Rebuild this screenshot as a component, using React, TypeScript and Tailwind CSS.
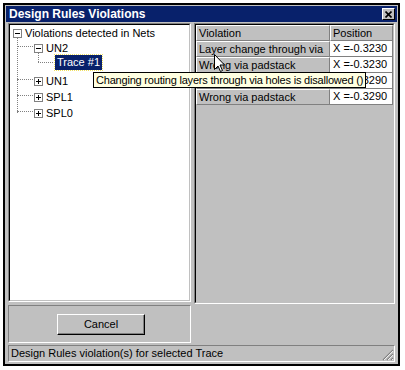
import React from "react";

const F = { fontFamily: '"Liberation Sans", Arial, sans-serif' };

function Box({ minus }: { minus?: boolean }) {
  return (
    <span className="relative inline-block w-[9px] h-[9px] border border-[#808080] bg-white shrink-0">
      <span className="absolute left-[1px] top-[3px] w-[5px] h-px bg-black" />
      {!minus && <span className="absolute left-[3px] top-[1px] w-px h-[5px] bg-black" />}
    </span>
  );
}

const rows = [
  ["Layer change through via", "X =-0.3230"],
  ["Wrong via padstack", "X =-0.3230"],
  ["Wrong via padstack", "X =-0.3290"],
  ["Wrong via padstack", "X =-0.3290"],
];

export default function App() {
  return (
    <div className="w-[405px] h-[370px] bg-white pl-[3px] pt-[3px] text-[11px] text-black whitespace-nowrap" style={F}>
      <div className="relative w-[397px] h-[363px] border-2 border-black bg-[#c0c0c0] flex flex-col">
        {/* title bar */}
        <div className="mx-px mt-px h-[17px] bg-[#08216b] flex items-center justify-between pl-[3px] pr-[2px]">
          <span className="text-white font-bold text-[12px] leading-none">Design Rules Violations</span>
          <span className="w-[13px] h-[12px] bg-[#c0c0c0] border border-t-white border-l-white border-r-black border-b-black flex items-center justify-center">
            <svg width="7" height="7" viewBox="0 0 7 7"><path d="M0.5 0.5L6.5 6.5M6.5 0.5L0.5 6.5" stroke="black" strokeWidth="1.6" /></svg>
          </span>
        </div>
        {/* body */}
        <div className="flex flex-1 mt-[1px] px-[3px] gap-[3px]">
          <div className="w-[188px] flex flex-col">
            {/* tree */}
            <div className="h-[279px] bg-white border border-t-[#808080] border-l-[#808080] border-r-white border-b-white">
              <div className="h-full border border-t-black border-l-black border-r-[#c0c0c0] border-b-[#c0c0c0] relative">
                {/* dotted lines */}
                <div className="absolute left-[7px] top-[10px] h-[78px] border-l border-dotted border-[#808080]" />
                <div className="absolute left-[7px] top-[21px] w-[16px] border-t border-dotted border-[#808080]" />
                <div className="absolute left-[7px] top-[54px] w-[16px] border-t border-dotted border-[#808080]" />
                <div className="absolute left-[7px] top-[70px] w-[16px] border-t border-dotted border-[#808080]" />
                <div className="absolute left-[7px] top-[86px] w-[16px] border-t border-dotted border-[#808080]" />
                <div className="absolute left-[28px] top-[25px] h-[12px] border-l border-dotted border-[#808080]" />
                <div className="absolute left-[28px] top-[37px] w-[17px] border-t border-dotted border-[#808080]" />
                <div className="absolute left-[3px] top-[1px] flex items-center gap-[3px] h-[14px]"><Box minus /><span>Violations detected in Nets</span></div>
                <div className="absolute left-[24px] top-[16px] flex items-center gap-[3px] h-[14px]"><Box minus /><span>UN2</span></div>
                <div className="absolute left-[45px] top-[30px] h-[15px] px-[2px] bg-[#08216b] text-white flex items-center outline-1 outline-dotted outline-[#f0e060]">Trace #1</div>
                <div className="absolute left-[24px] top-[49px] flex items-center gap-[3px] h-[14px]"><Box /><span>UN1</span></div>
                <div className="absolute left-[24px] top-[65px] flex items-center gap-[3px] h-[14px]"><Box /><span>SPL1</span></div>
                <div className="absolute left-[24px] top-[81px] flex items-center gap-[3px] h-[14px]"><Box /><span>SPL0</span></div>
              </div>
            </div>
            {/* cancel panel */}
            <div className="mt-[3px] h-[38px] border border-t-[#808080] border-l-[#808080] border-r-white border-b-white flex items-center justify-center">
              <div className="ml-[3px] w-[88px] h-[21px] border border-t-white border-l-white border-r-black border-b-black bg-[#c0c0c0] flex items-center justify-center shadow-[inset_-1px_-1px_0_#808080]">
                Cancel
              </div>
            </div>
          </div>
          {/* right grid */}
          <div className="flex-1 flex flex-col">
            <div className="h-[281px] border border-t-[#808080] border-l-[#808080] border-r-white border-b-white">
              <div className="h-full border border-t-black border-l-black border-r-[#c0c0c0] border-b-[#c0c0c0] bg-[#c0c0c0]">
                <div className="flex h-[16px]">
                  <div className="w-[134px] border border-t-white border-l-white border-r-[#808080] border-b-[#808080] pl-[2px] leading-[14px] overflow-hidden">Violation</div>
                  <div className="w-[63px] border border-t-white border-l-white border-r-[#808080] border-b-[#808080] pl-[2px] leading-[14px] overflow-hidden">Position</div>
                </div>
                {rows.map(([v, p], i) => (
                  <div key={i} className="flex h-[16px]">
                    <div className="w-[134px] border border-t-white border-l-white border-r-[#808080] border-b-[#808080] pl-[2px] leading-[14px] overflow-hidden">{v}</div>
                    <div className="w-[63px] bg-white border-r border-b border-[#808080] pl-[3px] leading-[15px] overflow-hidden">{p}</div>
                  </div>
                ))}
              </div>
            </div>
          </div>
        </div>
        {/* status bar */}
        <div className="mx-[3px] mb-[2px] mt-[2px] h-[17px] border border-t-[#808080] border-l-[#808080] border-r-white border-b-white flex items-center pl-[2px] relative">
          <span>Design Rules violation(s) for selected Trace</span>
          <svg className="absolute right-0 bottom-0" width="12" height="12" viewBox="0 0 12 12">
            <path d="M11 1L1 11M11 5L5 11M11 9L9 11" stroke="#808080" strokeWidth="1.2" />
            <path d="M11 2L2 11M11 6L6 11M11 10L10 11" stroke="white" strokeWidth="0.8" />
          </svg>
        </div>
        {/* tooltip */}
        <div className="absolute left-[88px] top-[67px] h-[16px] px-[2px] bg-[#ffffe1] border border-black flex items-center tracking-[-0.2px]">
          Changing routing layers through via holes is disallowed ()
        </div>
        {/* cursor */}
        <svg className="absolute left-[209px] top-[49px]" width="12" height="19" viewBox="0 0 12 19">
          <path d="M0.5 0.5V15.5L4 12L6.5 17.5L8.5 16.5L6 11H10.5Z" fill="white" stroke="black" strokeWidth="1" />
        </svg>
      </div>
    </div>
  );
}
